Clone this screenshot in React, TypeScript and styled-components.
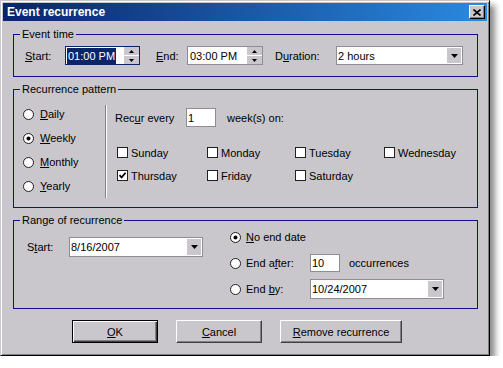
import React from "react";
import styled, { createGlobalStyle, css } from "styled-components";

const FACE = "#c9c7cc";
const NAVY = "#0a246a";
const FRAME = "#10108a";

const Global = createGlobalStyle`
  html, body { margin: 0; padding: 0; background: #fff; }
  body {
    font-family: Tahoma, "Liberation Sans", Arial, sans-serif;
    font-size: 11px;
    color: #000;
  }
`;

const Window = styled.div`
  width: 490px;
  height: 356px;
  box-sizing: border-box;
  background: ${FACE};
  border: 1px solid;
  border-color: ${FACE} #000 #000 ${FACE};
  box-shadow: inset 1px 1px #fff, inset -1px -1px #808080,
    5px 5px 6px rgba(0, 0, 0, 0.45);
  padding: 2px;
  display: flex;
  flex-direction: column;
`;

const TitleBar = styled.div`
  height: 18px;
  flex-shrink: 0;
  display: flex;
  align-items: center;
  justify-content: space-between;
  padding: 0 2px 0 4px;
  background: linear-gradient(to right, ${NAVY}, #2a8ae0);
`;

const Title = styled.span`
  color: #fff;
  font-weight: bold;
  font-size: 12px;
  font-family: "Liberation Sans", Arial, sans-serif;
`;

const CloseButton = styled.div`
  width: 16px;
  height: 14px;
  box-sizing: border-box;
  background: ${FACE};
  border: 1px solid;
  border-color: #fff #000 #000 #fff;
  box-shadow: inset -1px -1px #808080;
  display: flex;
  align-items: center;
  justify-content: center;
  padding-right: 1px;
`;

const Body = styled.div`
  flex: 1;
  display: flex;
  flex-direction: column;
  padding: 7px 0 10px 10px;
`;

const Group = styled.fieldset<{ $mt?: number }>`
  margin: ${(p) => p.$mt ?? 0}px 0 0 0;
  width: 465px;
  box-sizing: border-box;
  border: 1px solid ${FRAME};
  padding: 0;
  min-width: 0;
  min-inline-size: 0;
`;

const Legend = styled.legend`
  padding: 0 2px;
  margin-left: 6px;
  line-height: 13px;
  font-size: 11px;
`;

const Key = styled.span`
  text-decoration: underline;
  text-underline-offset: 1px;
`;

const Row = styled.div<{ $h: number }>`
  display: flex;
  align-items: center;
  height: ${(p) => p.$h}px;
`;

const TimeRow = styled(Row)`
  padding: 5px 0 11px 11px;
`;

const FieldLabel = styled.span<{ $w: number; $ml?: number }>`
  width: ${(p) => p.$w}px;
  margin-left: ${(p) => p.$ml ?? 0}px;
  flex-shrink: 0;
  white-space: nowrap;
`;

const Field = styled.div<{ $w: number; $h?: number; $focus?: boolean }>`
  width: ${(p) => p.$w}px;
  height: ${(p) => p.$h ?? 19}px;
  box-sizing: border-box;
  flex-shrink: 0;
  display: flex;
  background: #fff;
  border: 1px solid ${(p) => (p.$focus ? NAVY : "#8e8e92")};
`;

const FieldText = styled.div`
  flex: 1;
  display: flex;
  align-items: center;
  padding-left: 1px;
  white-space: nowrap;
  overflow: hidden;
`;

const Selection = styled.span`
  background: ${NAVY};
  color: #fff;
  line-height: 16px;
  padding: 0 1px;
`;

const SpinColumn = styled.div`
  width: 15px;
  display: flex;
  flex-direction: column;
  gap: 1px;
`;

const SpinHalf = styled.div`
  flex: 1;
  background: ${FACE};
  display: flex;
  align-items: center;
  justify-content: center;
`;

const DropButton = styled.div`
  width: 14px;
  margin: 1px;
  background: ${FACE};
  display: flex;
  align-items: center;
  justify-content: center;
`;

const PatternBody = styled.div`
  display: flex;
  padding: 6px 0 9px 0;
`;

const FreqColumn = styled.div`
  width: 83px;
  padding-left: 8px;
  display: flex;
  flex-direction: column;
`;

const Separator = styled.div`
  width: 0;
  margin-top: 3px;
  border-left: 1px solid #808080;
  border-right: 1px solid #fff;
`;

const WeeklyColumn = styled.div`
  padding: 6px 0 0 8px;
  display: flex;
  flex-direction: column;
`;

const DayGrid = styled.div`
  margin-top: 14px;
  padding-left: 1px;
  display: grid;
  grid-template-columns: 90px 88px 89px auto;
  grid-auto-rows: 23px;
  align-items: center;
`;

const Option = styled.div<{ $gap: number }>`
  display: flex;
  align-items: center;
  gap: ${(p) => p.$gap}px;
  white-space: nowrap;
`;

const FreqOption = styled(Option)`
  height: 24px;
`;

const RadioCell = styled.span<{ $on?: boolean }>`
  width: 13px;
  height: 13px;
  flex-shrink: 0;
  display: flex;
  align-items: center;
  justify-content: center;
  &::before {
    content: "";
    width: 11px;
    height: 11px;
    box-sizing: border-box;
    border-radius: 50%;
    border: 1px solid #202020;
    background: #fff;
    display: block;
  }
  ${(p) =>
    p.$on &&
    css`
      position: relative;
      &::after {
        content: "";
        position: absolute;
        left: 5px;
        top: 5px;
        width: 3px;
        height: 3px;
        border-radius: 50%;
        background: #000;
        box-shadow: 0 0 0 0.5px #000;
      }
    `}
`;

const CheckCell = styled.span`
  width: 13px;
  height: 13px;
  flex-shrink: 0;
  display: flex;
  align-items: center;
  justify-content: center;
`;

const CheckBox = styled.span`
  width: 11px;
  height: 11px;
  box-sizing: border-box;
  border: 1px solid #202020;
  background: #fff;
  display: flex;
  align-items: center;
  justify-content: center;
`;

const RangeBody = styled.div`
  display: flex;
  padding: 0 0 9px 13px;
`;

const StartRow = styled(Row)`
  margin-top: 10px;
`;

const EndOptions = styled.div`
  margin-left: 26px;
  display: flex;
  flex-direction: column;
  gap: 6px;
`;

const EndRow = styled(Option)`
  height: 20px;
`;

const Buttons = styled.div`
  display: flex;
  gap: 18px;
  margin: 11px 0 0 59px;
`;

const PushButton = styled.button<{ $w: number; $default?: boolean }>`
  width: ${(p) => p.$w}px;
  height: 23px;
  box-sizing: border-box;
  padding: 0;
  font: inherit;
  color: #000;
  background: ${FACE};
  border: 1px solid;
  border-color: #fff #404040 #404040 #fff;
  box-shadow: inset -1px -1px #808080;
  ${(p) =>
    p.$default &&
    css`
      border-color: #000;
      box-shadow: inset 1px 1px #fff, inset -1px -1px #404040,
        inset -2px -2px #808080;
    `}
`;

const Arrow = ({ up, w = 7, h = 4 }: { up?: boolean; w?: number; h?: number }) => (
  <svg width={w} height={h} viewBox={`0 0 ${w} ${h}`}>
    <path
      d={up ? `M0 ${h} L${w / 2} 0 L${w} ${h} Z` : `M0 0 L${w} 0 L${w / 2} ${h} Z`}
      fill="#000"
    />
  </svg>
);

const SpinBox = ({ w, value, focus }: { w: number; value: string; focus?: boolean }) => (
  <Field $w={w} $focus={focus}>
    <FieldText>{focus ? <Selection>{value}</Selection> : <span style={{ paddingLeft: 1 }}>{value}</span>}</FieldText>
    <SpinColumn>
      <SpinHalf>
        <Arrow up w={5} h={3} />
      </SpinHalf>
      <SpinHalf>
        <Arrow w={5} h={3} />
      </SpinHalf>
    </SpinColumn>
  </Field>
);

const ComboBox = ({ w, value, h = 19 }: { w: number; value: string; h?: number }) => (
  <Field $w={w} $h={h}>
    <FieldText>{value}</FieldText>
    <DropButton>
      <Arrow w={7} h={4} />
    </DropButton>
  </Field>
);

const TextBox = ({ w, h = 19, value }: { w: number; h?: number; value: string }) => (
  <Field $w={w} $h={h}>
    <FieldText>{value}</FieldText>
  </Field>
);

const Radio = ({ on, gap, children, as }: { on?: boolean; gap: number; children: React.ReactNode; as?: any }) => {
  const Wrap = as ?? Option;
  return (
    <Wrap $gap={gap}>
      <RadioCell $on={on} />
      {children}
    </Wrap>
  );
};

const Check = ({ on, children }: { on?: boolean; children: React.ReactNode }) => (
  <Option $gap={2}>
    <CheckCell>
      <CheckBox>
        {on && (
          <svg width="9" height="9" viewBox="0 0 9 9">
            <path d="M1.5 4.2 L3.6 6.4 L7.6 1.8" stroke="#000" strokeWidth="1.7" fill="none" />
          </svg>
        )}
      </CheckBox>
    </CheckCell>
    {children}
  </Option>
);

export default function App() {
  return (
    <>
      <Global />
      <Window>
        <TitleBar>
          <Title>Event recurrence</Title>
          <CloseButton>
            <svg width="8" height="7" viewBox="0 0 8 7">
              <path d="M0.5 0.5 L7.5 6.5 M7.5 0.5 L0.5 6.5" stroke="#000" strokeWidth="1.6" />
            </svg>
          </CloseButton>
        </TitleBar>
        <Body>
          <Group>
            <Legend>Event time</Legend>
            <TimeRow $h={19}>
              <FieldLabel $w={40}>
                <Key>S</Key>tart:
              </FieldLabel>
              <SpinBox w={75} value="01:00 PM" focus />
              <FieldLabel $w={31} $ml={16}>
                <Key>E</Key>nd:
              </FieldLabel>
              <SpinBox w={76} value="03:00 PM" />
              <FieldLabel $w={61} $ml={12}>
                D<Key>u</Key>ration:
              </FieldLabel>
              <ComboBox w={127} value="2 hours" />
            </TimeRow>
          </Group>

          <Group $mt={6}>
            <Legend>Recurrence pattern</Legend>
            <PatternBody>
              <FreqColumn>
                <Radio gap={5} as={FreqOption}>
                  <span>
                    <Key>D</Key>aily
                  </span>
                </Radio>
                <Radio gap={5} on as={FreqOption}>
                  <span>
                    <Key>W</Key>eekly
                  </span>
                </Radio>
                <Radio gap={5} as={FreqOption}>
                  <span>
                    <Key>M</Key>onthly
                  </span>
                </Radio>
                <Radio gap={5} as={FreqOption}>
                  <span>
                    <Key>Y</Key>early
                  </span>
                </Radio>
              </FreqColumn>
              <Separator />
              <WeeklyColumn>
                <Row $h={19}>
                  <FieldLabel $w={71}>
                    Rec<Key>u</Key>r every
                  </FieldLabel>
                  <TextBox w={30} value="1" />
                  <FieldLabel $w={80} $ml={11}>
                    week(s) on:
                  </FieldLabel>
                </Row>
                <DayGrid>
                  <Check>Sunday</Check>
                  <Check>Monday</Check>
                  <Check>Tuesday</Check>
                  <Check>Wednesday</Check>
                  <Check on>Thursday</Check>
                  <Check>Friday</Check>
                  <Check>Saturday</Check>
                </DayGrid>
              </WeeklyColumn>
            </PatternBody>
          </Group>

          <Group $mt={6}>
            <Legend>Range of recurrence</Legend>
            <RangeBody>
              <StartRow $h={20}>
                <FieldLabel $w={42}>
                  S<Key>t</Key>art:
                </FieldLabel>
                <ComboBox w={134} h={20} value="8/16/2007" />
              </StartRow>
              <EndOptions>
                <Radio gap={4} on as={EndRow}>
                  <span>
                    <Key>N</Key>o end date
                  </span>
                </Radio>
                <Radio gap={4} as={EndRow}>
                  <FieldLabel $w={60}>
                    End a<Key>f</Key>ter:
                  </FieldLabel>
                  <TextBox w={30} h={18} value="10" />
                  <FieldLabel $w={70} $ml={5}>
                    occurrences
                  </FieldLabel>
                </Radio>
                <Radio gap={4} as={EndRow}>
                  <FieldLabel $w={60}>
                    End <Key>b</Key>y:
                  </FieldLabel>
                  <ComboBox w={134} h={20} value="10/24/2007" />
                </Radio>
              </EndOptions>
            </RangeBody>
          </Group>

          <Buttons>
            <PushButton $w={86} $default>
              <Key>O</Key>K
            </PushButton>
            <PushButton $w={86}>
              <Key>C</Key>ancel
            </PushButton>
            <PushButton $w={122}>
              <Key>R</Key>emove recurrence
            </PushButton>
          </Buttons>
        </Body>
      </Window>
    </>
  );
}
